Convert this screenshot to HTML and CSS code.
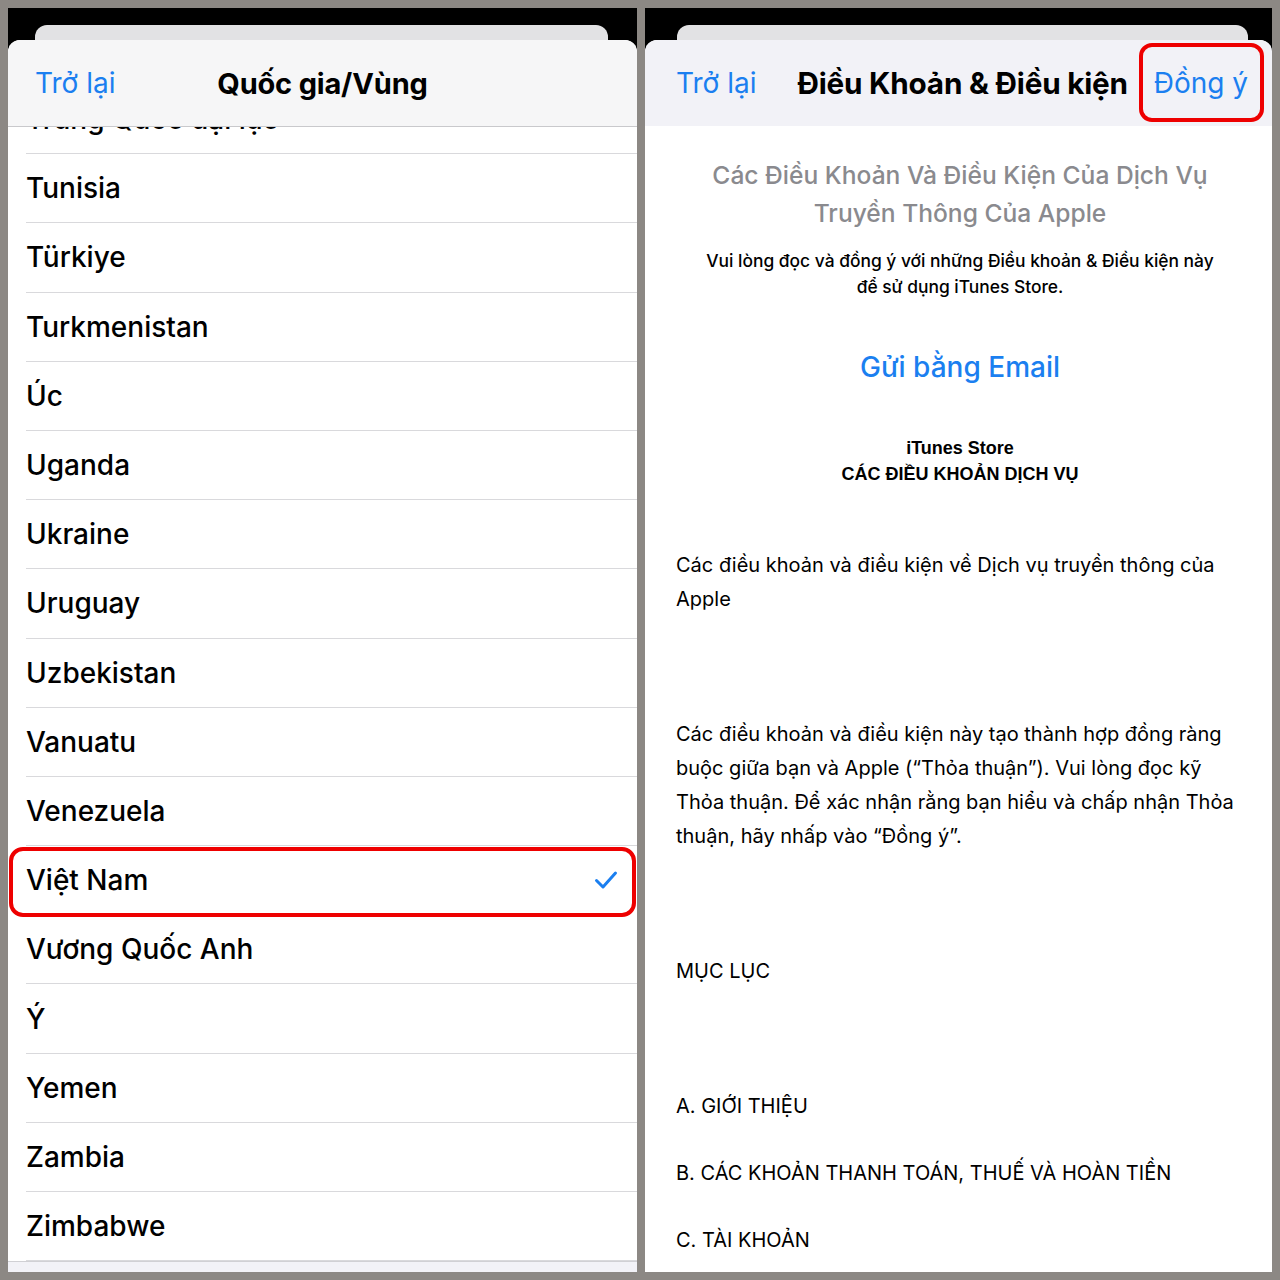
FILE: index.html
```html
<!DOCTYPE html>
<html lang="vi">
<head>
    <meta charset="UTF-8">
    <meta name="viewport" content="width=device-width, initial-scale=1.0">
    <title>Quốc gia/Vùng - Điều Khoản</title>
    <link rel="stylesheet" href="styles.css">
</head>
<body>
    <!-- Left: country picker -->
    <div class="phone phone-left">
        <div class="back-card"></div>
        <div class="sheet">
            <div class="nav nav-list">
                <span class="nav-back">Trở lại</span>
                <span class="nav-title">Quốc gia/Vùng</span>
                <span></span>
            </div>
            <div class="list-wrap">
                <ul class="country-list">
                    <li>Trung Quốc đại lục</li>
                    <li>Tunisia</li>
                    <li>Türkiye</li>
                    <li>Turkmenistan</li>
                    <li>Úc</li>
                    <li>Uganda</li>
                    <li>Ukraine</li>
                    <li>Uruguay</li>
                    <li>Uzbekistan</li>
                    <li>Vanuatu</li>
                    <li>Venezuela</li>
                    <li class="selected">
                        Việt Nam
                        <svg class="check" width="24" height="20" viewBox="0 0 24 20">
                            <path d="M2.5 10.5 L9 17 L21.5 3" fill="none" stroke="#1b7ff0" stroke-width="3" stroke-linecap="round" stroke-linejoin="round"/>
                        </svg>
                        <span class="highlight"></span>
                    </li>
                    <li>Vương Quốc Anh</li>
                    <li>Ý</li>
                    <li>Yemen</li>
                    <li>Zambia</li>
                    <li>Zimbabwe</li>
                </ul>
            </div>
            <div class="tabbar"></div>
        </div>
    </div>

    <!-- Right: terms & conditions -->
    <div class="phone phone-right">
        <div class="back-card"></div>
        <div class="sheet">
            <div class="nav nav-terms">
                <span class="nav-back">Trở lại</span>
                <span class="nav-title">Điều Khoản &amp; Điều kiện</span>
                <span class="nav-agree">Đồng ý</span>
            </div>
            <div class="terms">
                <h2 class="terms-title">Các Điều Khoản Và Điều Kiện Của Dịch Vụ<br>Truyền Thông Của Apple</h2>
                <p class="terms-intro">Vui lòng đọc và đồng ý với những Điều khoản &amp; Điều kiện này<br>để sử dụng iTunes Store.</p>
                <p class="send-email">Gửi bằng Email</p>
                <p class="store-head">iTunes Store<br>CÁC ĐIỀU KHOẢN DỊCH VỤ</p>
                <p class="para para-first">Các điều khoản và điều kiện về Dịch vụ truyền thông của Apple</p>
                <p class="para">Các điều khoản và điều kiện này tạo thành hợp đồng ràng buộc giữa bạn và Apple (“Thỏa thuận”). Vui lòng đọc kỹ Thỏa thuận. Để xác nhận rằng bạn hiểu và chấp nhận Thỏa thuận, hãy nhấp vào “Đồng ý”.</p>
                <p class="para">MỤC LỤC</p>
                <p class="para">A. GIỚI THIỆU</p>
                <p class="para para-toc">B. CÁC KHOẢN THANH TOÁN, THUẾ VÀ HOÀN TIỀN</p>
                <p class="para para-toc">C. TÀI KHOẢN</p>
            </div>
        </div>
    </div>
</body>
</html>
```

FILE: styles.css
```css
body {
    margin: 0;
    width: 1280px;
    height: 1280px;
    box-sizing: border-box;
    padding: 8px;
    display: flex;
    gap: 8px;
    background: #8c8884;
    font-family: Inter, "Noto Sans", sans-serif;
    color: #000;
}
.phone {
    height: 1264px;
    background: #000;
    display: flex;
    flex-direction: column;
    overflow: hidden;
}
.phone-left {
    width: 629px;
}
.phone-right {
    width: 627px;
}
.back-card {
    height: 15px;
    margin: 17px 29px 0 27px;
    background: #e2e2e4;
    border-radius: 12px 12px 0 0;
    flex-shrink: 0;
}
.phone-right .back-card {
    margin: 17px 24px 0 32px;
}
.sheet {
    flex: 1;
    display: flex;
    flex-direction: column;
    background: #fff;
    border-radius: 12px 12px 0 0;
    overflow: hidden;
}

/* nav bars */
.nav {
    height: 86px;
    flex-shrink: 0;
    display: flex;
    align-items: center;
    font-size: 28px;
    position: relative;
    z-index: 2;
}
.nav-list {
    display: grid;
    grid-template-columns: 1fr auto 1fr;
    padding-left: 27px;
    padding-right: 27px;
    background: #f6f6f7;
    border-bottom: 1px solid #c9c9cc;
}
.nav-terms {
    padding: 0 24px 0 31px;
    background: #f2f2f7;
}
.nav-back,
.nav-agree {
    color: #1b7ff0;
    line-height: 34px;
}
.nav-title {
    font-weight: 700;
    font-size: 29px;
    letter-spacing: -0.2px;
}
.nav-terms .nav-title {
    font-size: 29.7px;
    margin-left: 41px;
}
.nav-agree {
    position: relative;
    margin-left: auto;
}
.nav-agree::after {
    content: "";
    position: absolute;
    top: -23px;
    bottom: -22px;
    left: -15px;
    right: -16px;
    border: 4px solid #ee0000;
    border-radius: 13px;
}

/* country list */
.list-wrap {
    flex: 1;
    overflow: hidden;
}
.country-list {
    list-style: none;
    margin: -42px 0 0 0;
    padding: 0;
}
.country-list li {
    height: 69.2px;
    box-sizing: border-box;
    margin-left: 18px;
    border-bottom: 1px solid #d9d9dc;
    display: flex;
    align-items: center;
    font-size: 28px;
    font-weight: 500;
    position: relative;
}
.country-list li.selected {
    border-bottom-color: transparent;
}
.check {
    margin-left: auto;
    margin-right: 19px;
}
.highlight {
    position: absolute;
    top: 1px;
    bottom: -3px;
    left: -17px;
    right: 1px;
    border: 4px solid #ee0000;
    border-radius: 14px;
}
.tabbar {
    height: 10px;
    flex-shrink: 0;
    background: #f2f2f7;
    border-top: 1px solid #d0d0d4;
}

/* terms text */
.terms {
    padding: 0 28px 0 31px;
}
.terms p,
.terms h2 {
    margin: 0;
}
.terms-title {
    margin-top: 30px !important;
    text-align: center;
    font-size: 24.6px;
    font-weight: 500;
    line-height: 38px;
    color: #8a8a8e;
}
.terms-intro {
    margin-top: 16px !important;
    text-align: center;
    font-size: 17.4px;
    font-weight: 500;
    line-height: 26px;
}
.send-email {
    margin-top: 47px !important;
    text-align: center;
    font-size: 28px;
    font-weight: 500;
    line-height: 40px;
    color: #1b7ff0;
}
.store-head {
    margin-top: 48px !important;
    text-align: center;
    font-family: "Liberation Sans", Arial, sans-serif;
    font-weight: 700;
    font-size: 18px;
    line-height: 26px;
}
.para {
    margin-top: 101px !important;
    font-size: 20px;
    line-height: 34px;
}
.para-first {
    margin-top: 61px !important;
}
.para-toc {
    margin-top: 33px !important;
}
```
